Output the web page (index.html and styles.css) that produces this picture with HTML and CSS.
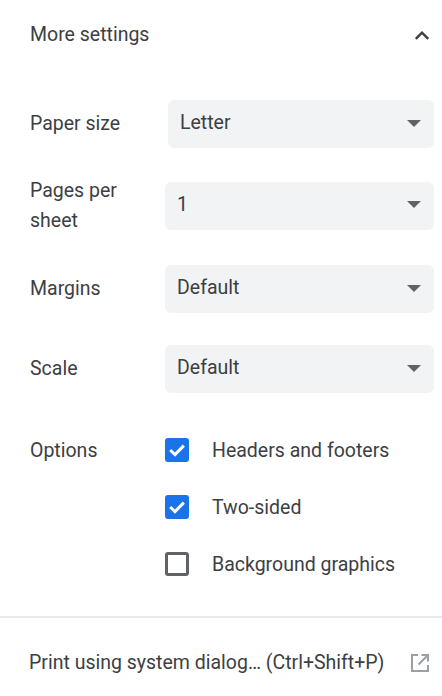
FILE: index.html
```html
<!DOCTYPE html>
<html>
<head>
<meta charset="utf-8">
<link rel="stylesheet" href="styles.css">
</head>
<body>
<div class="head"><span>More settings</span>
<svg class="chev" width="16" height="10" viewBox="0 0 16 10"><path d="M1.8 8.8 8 2.6l6.2 6.200" fill="none" stroke="#3c4043" stroke-width="2.400"/></svg></div>
<div class="row r1"><div class="label">Paper size</div><div class="sel wide">Letter<i></i></div></div>
<div class="row r2"><div class="label two">Pages per sheet</div><div class="sel">1<i></i></div></div>
<div class="row r3"><div class="label">Margins</div><div class="sel">Default<i></i></div></div>
<div class="row r4"><div class="label">Scale</div><div class="sel">Default<i></i></div></div>
<div class="opts">
<div class="label">Options</div>
<div class="checks">
<div class="check"><span class="box on"><svg width="24" height="24" viewBox="0 0 24 24"><path d="M5.200 12 10 16.600 18.800 7.600" fill="none" stroke="#fff" stroke-width="3"/></svg></span>Headers and footers</div>
<div class="check"><span class="box on"><svg width="24" height="24" viewBox="0 0 24 24"><path d="M5.200 12 10 16.600 18.800 7.600" fill="none" stroke="#fff" stroke-width="3"/></svg></span>Two-sided</div>
<div class="check"><span class="box"></span>Background graphics</div>
</div>
</div>
<div class="foot"><span>Print using system dialog… (Ctrl+Shift+P)</span>
<svg width="20" height="20" viewBox="0 0 20 20"><path d="M8 2H2v16h16v-6M11.500 2H18v6.500M17.500 2.500 8.500 11.500" fill="none" stroke="#9aa0a6" stroke-width="2"/></svg></div>
</body>
</html>
```
FILE: styles.css
```css
html,body{margin:0;padding:0;}
body{width:442px;height:696px;overflow:hidden;background:#fff;color:#3c4043;font-family:Roboto,sans-serif;font-size:19.5px;line-height:28px;}
.head{display:flex;justify-content:space-between;align-items:center;padding:21px 12px 0 30px;height:28px;}
.row{display:flex;align-items:center;padding:0 8px 0 30px;}
.r1{margin-top:51px;}
.r2{margin-top:28px;}
.r3{margin-top:30px;}
.r4{margin-top:32px;}
.label{width:135px;flex:none;}
.two{width:120px;line-height:29.500px;margin-right:15px;}
.sel{flex:1;height:48px;box-sizing:border-box;padding:0 12px 2px;background:#f1f3f4;border-radius:6px;display:flex;align-items:center;justify-content:space-between;}
.wide{margin-left:3px;}
.sel i{width:0;height:0;border-left:7.500px solid transparent;border-right:7.500px solid transparent;border-top:7.500px solid #5f6368;margin-right:1px;}
.opts{display:flex;padding-left:30px;margin-top:44px;}
.checks{display:flex;flex-direction:column;gap:29px;}
.check{display:flex;align-items:center;gap:23px;height:28px;}
.box{width:24px;height:24px;box-sizing:border-box;border:3px solid #5f6368;border-radius:3px;margin-top:-2px;}
.box.on{border:0;background:#1a73e8;}
.box svg{display:block;}
.foot{border-top:2px solid #e8eaed;margin-top:37px;padding:31px 12px 0 29px;display:flex;justify-content:space-between;align-items:center;}
```
